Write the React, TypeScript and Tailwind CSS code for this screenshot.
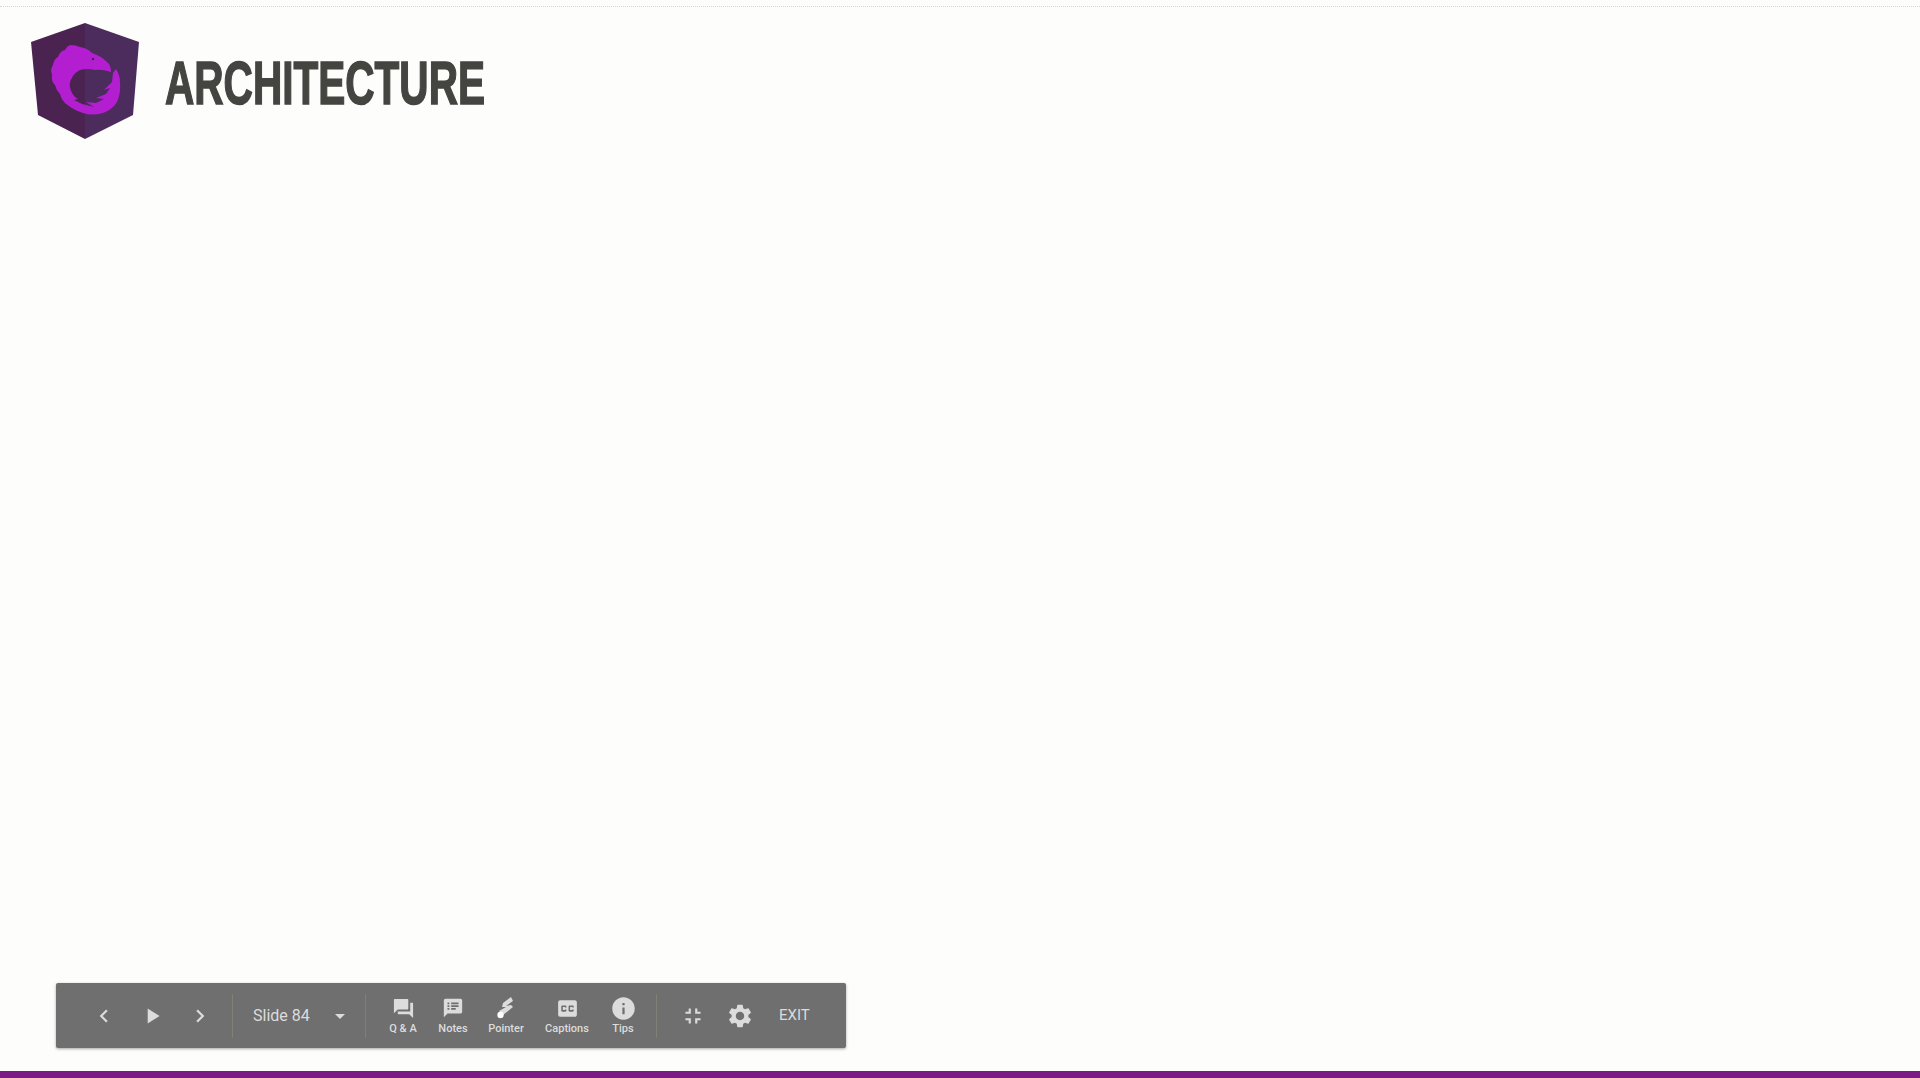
import {
  MdChevronLeft,
  MdChevronRight,
  MdPlayArrow,
  MdArrowDropDown,
  MdQuestionAnswer,
  MdSpeakerNotes,
  MdClosedCaption,
  MdInfo,
  MdFullscreenExit,
  MdSettings,
} from "react-icons/md";

function NgrxLogo() {
  return (
    <svg viewBox="0 0 130 130" className="w-[130px] h-[130px] shrink-0">
      {/* shield */}
      <path d="M65 8 L11 27 L18 100 L65 124 Z" fill="#4b2350" />
      <path d="M65 8 L119 27 L113 100 L65 124 Z" fill="#4c2c5c" />
      {/* dragon */}
      <path
        d="M50 30 Q56 30 60 32 Q67 33 72 38 Q81 41 87 47 Q91 50 91 57 Q82 54 75 55 Q67 53 60 55 Q54 58 52 63 Q49 67 50 72 Q51 78 55 82 L58 84 L54 85 L62 89 L74 92 L66 87 L76 88 L84 84 L76 83 L86 79 L90 73 L84 75 L92 67 L93 58 L96 54 Q100 60 100 67 Q101 78 97 87 Q92 95 83 98 Q73 101 63 98 Q53 95 45 88 Q41 84 40 79 Q36 75 35 70 Q31 67 32 60 Q30 54 33 50 Q34 44 38 42 Q40 36 45 35 Q47 31 50 30 Z"
        fill="#b31fd0"
      />
      <circle cx="73" cy="44" r="1.2" fill="#4b2350" />
    </svg>
  );
}

function PointerIcon() {
  return (
    <svg viewBox="0 0 24 24" className="w-6 h-6 text-[#dcdcdc]" fill="currentColor">
      <path d="M17 1 L19 5 L12 10 L17 9 L19 11 L9 19 L5 15 L12 11 L8 11 L9 7 Z" />
      <circle cx="6.5" cy="19" r="3.2" fill="#ffffff" />
    </svg>
  );
}

const tools = [
  { label: "Q & A", width: "w-[50px]", icon: <MdQuestionAnswer size={23} /> },
  { label: "Notes", width: "w-[50px]", icon: <MdSpeakerNotes size={22} /> },
  { label: "Pointer", width: "w-[56px]", icon: <PointerIcon /> },
  { label: "Captions", width: "w-[66px]", icon: <MdClosedCaption size={25} /> },
  { label: "Tips", width: "w-[46px]", icon: <MdInfo size={27} /> },
];

function Divider() {
  return <div className="w-px h-[44px] bg-[#7f7f78]" />;
}

export default function App() {
  return (
    <div className="h-screen flex flex-col bg-[#fdfdfc] overflow-hidden font-['Roboto',sans-serif]">
      <div className="h-[7px] shrink-0 border-b border-dotted border-[#d8d8c8]" />

      {/* Slide header */}
      <div className="flex items-center ml-5 mt-2">
        <NgrxLogo />
        <h1 className="ml-[15px] mt-[7px] origin-left scale-x-[0.665] font-['Liberation_Sans',sans-serif] font-bold text-[61px] leading-none text-[#444440] whitespace-nowrap [-webkit-text-stroke:1.5px_#444440]">
          ARCHITECTURE
        </h1>
      </div>

      <div className="flex-1" />

      {/* Presenter toolbar */}
      <div className="ml-14 mb-[23px] w-[790px] h-[65px] flex items-center pl-6 bg-[#6f6f6f] rounded-[2px] shadow-[0_1px_3px_rgba(0,0,0,0.35)] text-[#dcdcdc]">
        <div className="w-12 flex justify-center">
          <MdChevronLeft size={26} />
        </div>
        <div className="w-12 flex justify-center">
          <MdPlayArrow size={26} />
        </div>
        <div className="w-12 flex justify-center">
          <MdChevronRight size={26} />
        </div>
        <div className="ml-2">
          <Divider />
        </div>
        <span className="ml-5 text-[16px] leading-none w-[56px] whitespace-nowrap">Slide 84</span>
        <div className="ml-[19px] w-6 flex justify-center">
          <MdArrowDropDown size={24} />
        </div>
        <div className="ml-[13px]">
          <Divider />
        </div>
        <div className="ml-[12px] flex">
          {tools.map((tool) => (
            <div key={tool.label} className={`${tool.width} flex flex-col items-center`}>
              <div className="h-[26px] flex items-center justify-center">{tool.icon}</div>
              <span className="mt-px text-[11px] leading-[14px] font-medium whitespace-nowrap">{tool.label}</span>
            </div>
          ))}
        </div>
        <div className="ml-[10px]">
          <Divider />
        </div>
        <div className="ml-[23px] w-[26px] flex justify-center">
          <MdFullscreenExit size={26} />
        </div>
        <div className="ml-[20px] w-[28px] flex justify-center">
          <MdSettings size={28} />
        </div>
        <span className="ml-[25px] text-[15px] leading-none">EXIT</span>
      </div>

      <div className="h-[7px] shrink-0 bg-[#7b1a85]" />
    </div>
  );
}
